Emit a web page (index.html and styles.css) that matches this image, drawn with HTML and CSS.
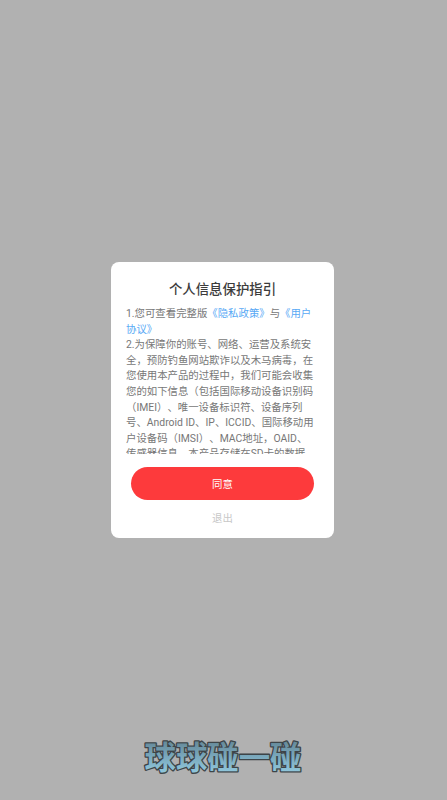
FILE: index.html
```html
<!DOCTYPE html>
<html lang="zh-CN">
<head>
<meta charset="utf-8">
<title>球球碰一碰</title>
<link rel="stylesheet" href="styles.css">
</head>
<body>
<main class="screen">
  <section class="dialog">
    <h1 class="title">个人信息保护指引</h1>
    <div class="terms">
      <p class="para">1.您可查看完整版<a class="link">《隐私政策》</a>与<a class="link">《用户协议》</a></p>
      <p class="para">2.为保障你的账号、网络、运营及系统安全，预防钓鱼网站欺诈以及木马病毒，在您使用本产品的过程中，我们可能会收集您的如下信息（包括国际移动设备识别码（IMEI）、唯一设备标识符、设备序列号、Android ID、IP、ICCID、国际移动用户设备码（IMSI）、MAC地址，OAID、传感器信息。本产品存储在SD卡的数据</p>
    </div>
    <button class="agree">同意</button>
    <button class="quit">退出</button>
  </section>
  <div class="logo">
    <svg class="logo-art" viewBox="0 0 170 44" width="170" height="44">
      <defs>
        <linearGradient id="logoFill" x1="0" y1="0" x2="0" y2="1">
          <stop offset="0" stop-color="#5a7886"/>
          <stop offset="0.5" stop-color="#78a6ba"/>
          <stop offset="1" stop-color="#98d2e8"/>
        </linearGradient>
      </defs>
      <text class="logo-text" x="85" y="33" text-anchor="middle" fill="url(#logoFill)">球球碰一碰</text>
    </svg>
  </div>
</main>
</body>
</html>
```
FILE: styles.css
```css
* { box-sizing: border-box; }
html, body { margin: 0; padding: 0; }
body {
  width: 447px;
  height: 800px;
  overflow: hidden;
  background: #b1b1b1;
  font-family: Roboto, "Noto Sans CJK SC", sans-serif;
  text-spacing-trim: space-all;
}
.screen {
  height: 800px;
  padding-right: 2px;
  display: grid;
  grid-template-rows: 1fr auto 1fr;
  justify-items: center;
}
.dialog {
  grid-row: 2;
  width: 223px;
  height: 276px;
  background: #fff;
  border-radius: 8px;
  padding: 18px 15px 0;
  display: flex;
  flex-direction: column;
  align-items: center;
}
.title {
  margin: 0;
  font-size: 13.4px;
  line-height: 19px;
  font-weight: 500;
  color: #3c3c3c;
  text-align: center;
}
.terms {
  margin-top: 7px;
  align-self: flex-start;
  width: 188px;
  height: 148px;
  overflow: hidden;
  font-size: 10.4px;
  line-height: 15.6px;
  color: #777;
}
.para { margin: 0; }
.link { color: #58a9f5; }
.agree {
  margin-top: 13px;
  width: 183px;
  height: 33px;
  flex: none;
  border: 0;
  border-radius: 17px;
  background: #fd3a3c;
  color: #fff;
  font: inherit;
  font-size: 10.4px;
}
.quit {
  margin-top: 11px;
  border: 0;
  padding: 0;
  background: none;
  color: #c8c8c8;
  font: inherit;
  font-size: 10.4px;
  line-height: 16px;
}
.logo {
  grid-row: 3;
  align-self: end;
  padding-bottom: 20px;
}
.logo-art { display: block; }
.logo-text {
  font-family: "Noto Sans CJK SC", sans-serif;
  font-size: 31.4px;
  font-weight: 700;
  stroke: #3d4448;
  stroke-width: 2.6px;
  stroke-linejoin: round;
  paint-order: stroke;
}
```
